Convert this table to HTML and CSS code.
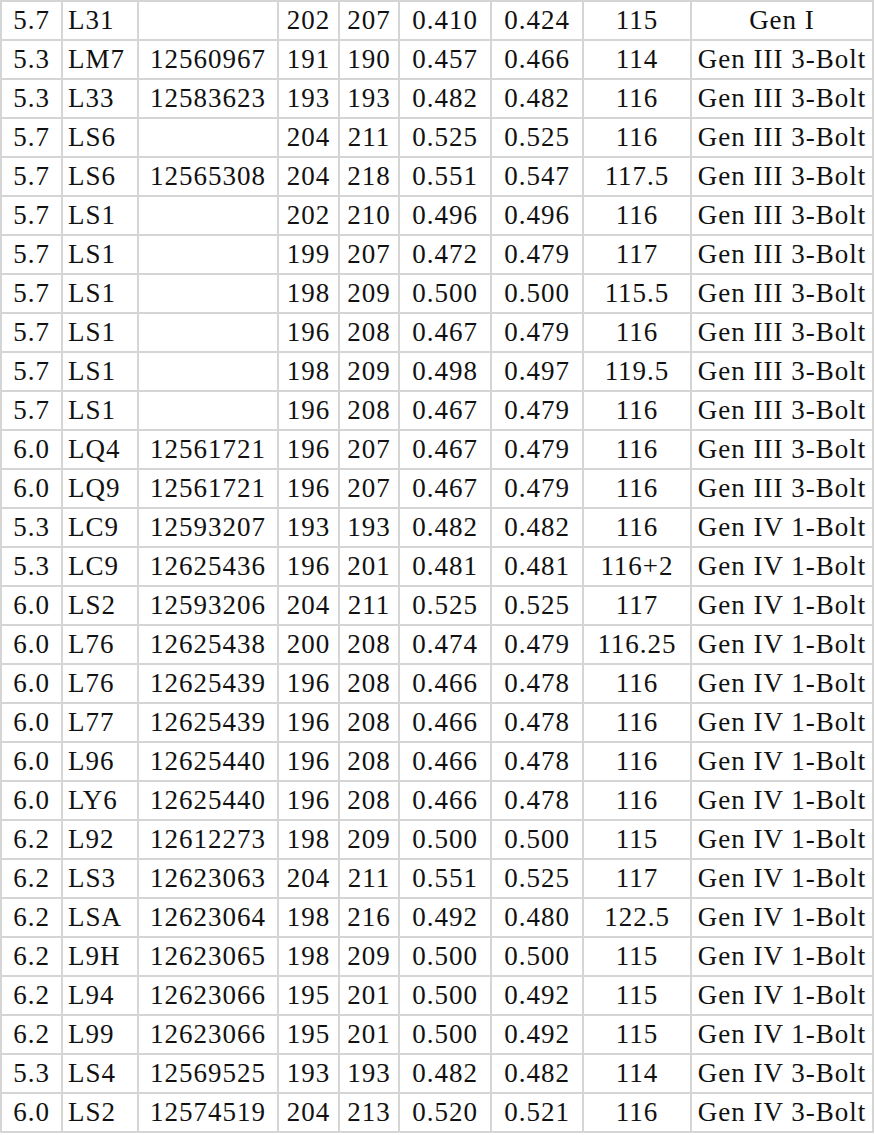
FILE: index.html
```html
<!DOCTYPE html>
<html>
<head>
<meta charset="utf-8">
<link rel="stylesheet" href="styles.css">
</head>
<body>
<table class="engines">
<colgroup>
<col class="c1"><col class="c2"><col class="c3"><col class="c4"><col class="c5"><col class="c6"><col class="c7"><col class="c8"><col class="c9">
</colgroup>
<tbody>
<tr><td>5.7</td><td class="code">L31</td><td></td><td>202</td><td>207</td><td>0.410</td><td>0.424</td><td>115</td><td>Gen I</td></tr>
<tr><td>5.3</td><td class="code">LM7</td><td>12560967</td><td>191</td><td>190</td><td>0.457</td><td>0.466</td><td>114</td><td>Gen III 3-Bolt</td></tr>
<tr><td>5.3</td><td class="code">L33</td><td>12583623</td><td>193</td><td>193</td><td>0.482</td><td>0.482</td><td>116</td><td>Gen III 3-Bolt</td></tr>
<tr><td>5.7</td><td class="code">LS6</td><td></td><td>204</td><td>211</td><td>0.525</td><td>0.525</td><td>116</td><td>Gen III 3-Bolt</td></tr>
<tr><td>5.7</td><td class="code">LS6</td><td>12565308</td><td>204</td><td>218</td><td>0.551</td><td>0.547</td><td>117.5</td><td>Gen III 3-Bolt</td></tr>
<tr><td>5.7</td><td class="code">LS1</td><td></td><td>202</td><td>210</td><td>0.496</td><td>0.496</td><td>116</td><td>Gen III 3-Bolt</td></tr>
<tr><td>5.7</td><td class="code">LS1</td><td></td><td>199</td><td>207</td><td>0.472</td><td>0.479</td><td>117</td><td>Gen III 3-Bolt</td></tr>
<tr><td>5.7</td><td class="code">LS1</td><td></td><td>198</td><td>209</td><td>0.500</td><td>0.500</td><td>115.5</td><td>Gen III 3-Bolt</td></tr>
<tr><td>5.7</td><td class="code">LS1</td><td></td><td>196</td><td>208</td><td>0.467</td><td>0.479</td><td>116</td><td>Gen III 3-Bolt</td></tr>
<tr><td>5.7</td><td class="code">LS1</td><td></td><td>198</td><td>209</td><td>0.498</td><td>0.497</td><td>119.5</td><td>Gen III 3-Bolt</td></tr>
<tr><td>5.7</td><td class="code">LS1</td><td></td><td>196</td><td>208</td><td>0.467</td><td>0.479</td><td>116</td><td>Gen III 3-Bolt</td></tr>
<tr><td>6.0</td><td class="code">LQ4</td><td>12561721</td><td>196</td><td>207</td><td>0.467</td><td>0.479</td><td>116</td><td>Gen III 3-Bolt</td></tr>
<tr><td>6.0</td><td class="code">LQ9</td><td>12561721</td><td>196</td><td>207</td><td>0.467</td><td>0.479</td><td>116</td><td>Gen III 3-Bolt</td></tr>
<tr><td>5.3</td><td class="code">LC9</td><td>12593207</td><td>193</td><td>193</td><td>0.482</td><td>0.482</td><td>116</td><td>Gen IV 1-Bolt</td></tr>
<tr><td>5.3</td><td class="code">LC9</td><td>12625436</td><td>196</td><td>201</td><td>0.481</td><td>0.481</td><td>116+2</td><td>Gen IV 1-Bolt</td></tr>
<tr><td>6.0</td><td class="code">LS2</td><td>12593206</td><td>204</td><td>211</td><td>0.525</td><td>0.525</td><td>117</td><td>Gen IV 1-Bolt</td></tr>
<tr><td>6.0</td><td class="code">L76</td><td>12625438</td><td>200</td><td>208</td><td>0.474</td><td>0.479</td><td>116.25</td><td>Gen IV 1-Bolt</td></tr>
<tr><td>6.0</td><td class="code">L76</td><td>12625439</td><td>196</td><td>208</td><td>0.466</td><td>0.478</td><td>116</td><td>Gen IV 1-Bolt</td></tr>
<tr><td>6.0</td><td class="code">L77</td><td>12625439</td><td>196</td><td>208</td><td>0.466</td><td>0.478</td><td>116</td><td>Gen IV 1-Bolt</td></tr>
<tr><td>6.0</td><td class="code">L96</td><td>12625440</td><td>196</td><td>208</td><td>0.466</td><td>0.478</td><td>116</td><td>Gen IV 1-Bolt</td></tr>
<tr><td>6.0</td><td class="code">LY6</td><td>12625440</td><td>196</td><td>208</td><td>0.466</td><td>0.478</td><td>116</td><td>Gen IV 1-Bolt</td></tr>
<tr><td>6.2</td><td class="code">L92</td><td>12612273</td><td>198</td><td>209</td><td>0.500</td><td>0.500</td><td>115</td><td>Gen IV 1-Bolt</td></tr>
<tr><td>6.2</td><td class="code">LS3</td><td>12623063</td><td>204</td><td>211</td><td>0.551</td><td>0.525</td><td>117</td><td>Gen IV 1-Bolt</td></tr>
<tr><td>6.2</td><td class="code">LSA</td><td>12623064</td><td>198</td><td>216</td><td>0.492</td><td>0.480</td><td>122.5</td><td>Gen IV 1-Bolt</td></tr>
<tr><td>6.2</td><td class="code">L9H</td><td>12623065</td><td>198</td><td>209</td><td>0.500</td><td>0.500</td><td>115</td><td>Gen IV 1-Bolt</td></tr>
<tr><td>6.2</td><td class="code">L94</td><td>12623066</td><td>195</td><td>201</td><td>0.500</td><td>0.492</td><td>115</td><td>Gen IV 1-Bolt</td></tr>
<tr><td>6.2</td><td class="code">L99</td><td>12623066</td><td>195</td><td>201</td><td>0.500</td><td>0.492</td><td>115</td><td>Gen IV 1-Bolt</td></tr>
<tr><td>5.3</td><td class="code">LS4</td><td>12569525</td><td>193</td><td>193</td><td>0.482</td><td>0.482</td><td>114</td><td>Gen IV 3-Bolt</td></tr>
<tr><td>6.0</td><td class="code">LS2</td><td>12574519</td><td>204</td><td>213</td><td>0.520</td><td>0.521</td><td>116</td><td>Gen IV 3-Bolt</td></tr>
</tbody>
</table>
</body>
</html>
```

FILE: styles.css
```css
html, body {
  margin: 0;
  padding: 0;
  background: #ffffff;
}

.engines {
  border-collapse: separate;
  border-spacing: 0;
  table-layout: fixed;
  width: 874px;
  border-top: 2px solid #d5d5d5;
  border-left: 2px solid #d5d5d5;
  font-family: "Liberation Serif", serif;
  font-size: 27px;
  letter-spacing: 1px;
  color: #111111;
}

.c1 { width: 61px; }
.c2 { width: 76px; }
.c3 { width: 140px; }
.c4 { width: 61px; }
.c5 { width: 60px; }
.c6 { width: 92px; }
.c7 { width: 92px; }
.c8 { width: 108px; }
.c9 { width: 182px; }

.engines td {
  box-sizing: border-box;
  height: 39.03px;
  padding: 0 2px;
  border-right: 2px solid #d5d5d5;
  border-bottom: 2px solid #d5d5d5;
  text-align: center;
  vertical-align: middle;
  white-space: nowrap;
  line-height: 1;
}

.engines td.code {
  text-align: left;
  padding-left: 5px;
}
```
